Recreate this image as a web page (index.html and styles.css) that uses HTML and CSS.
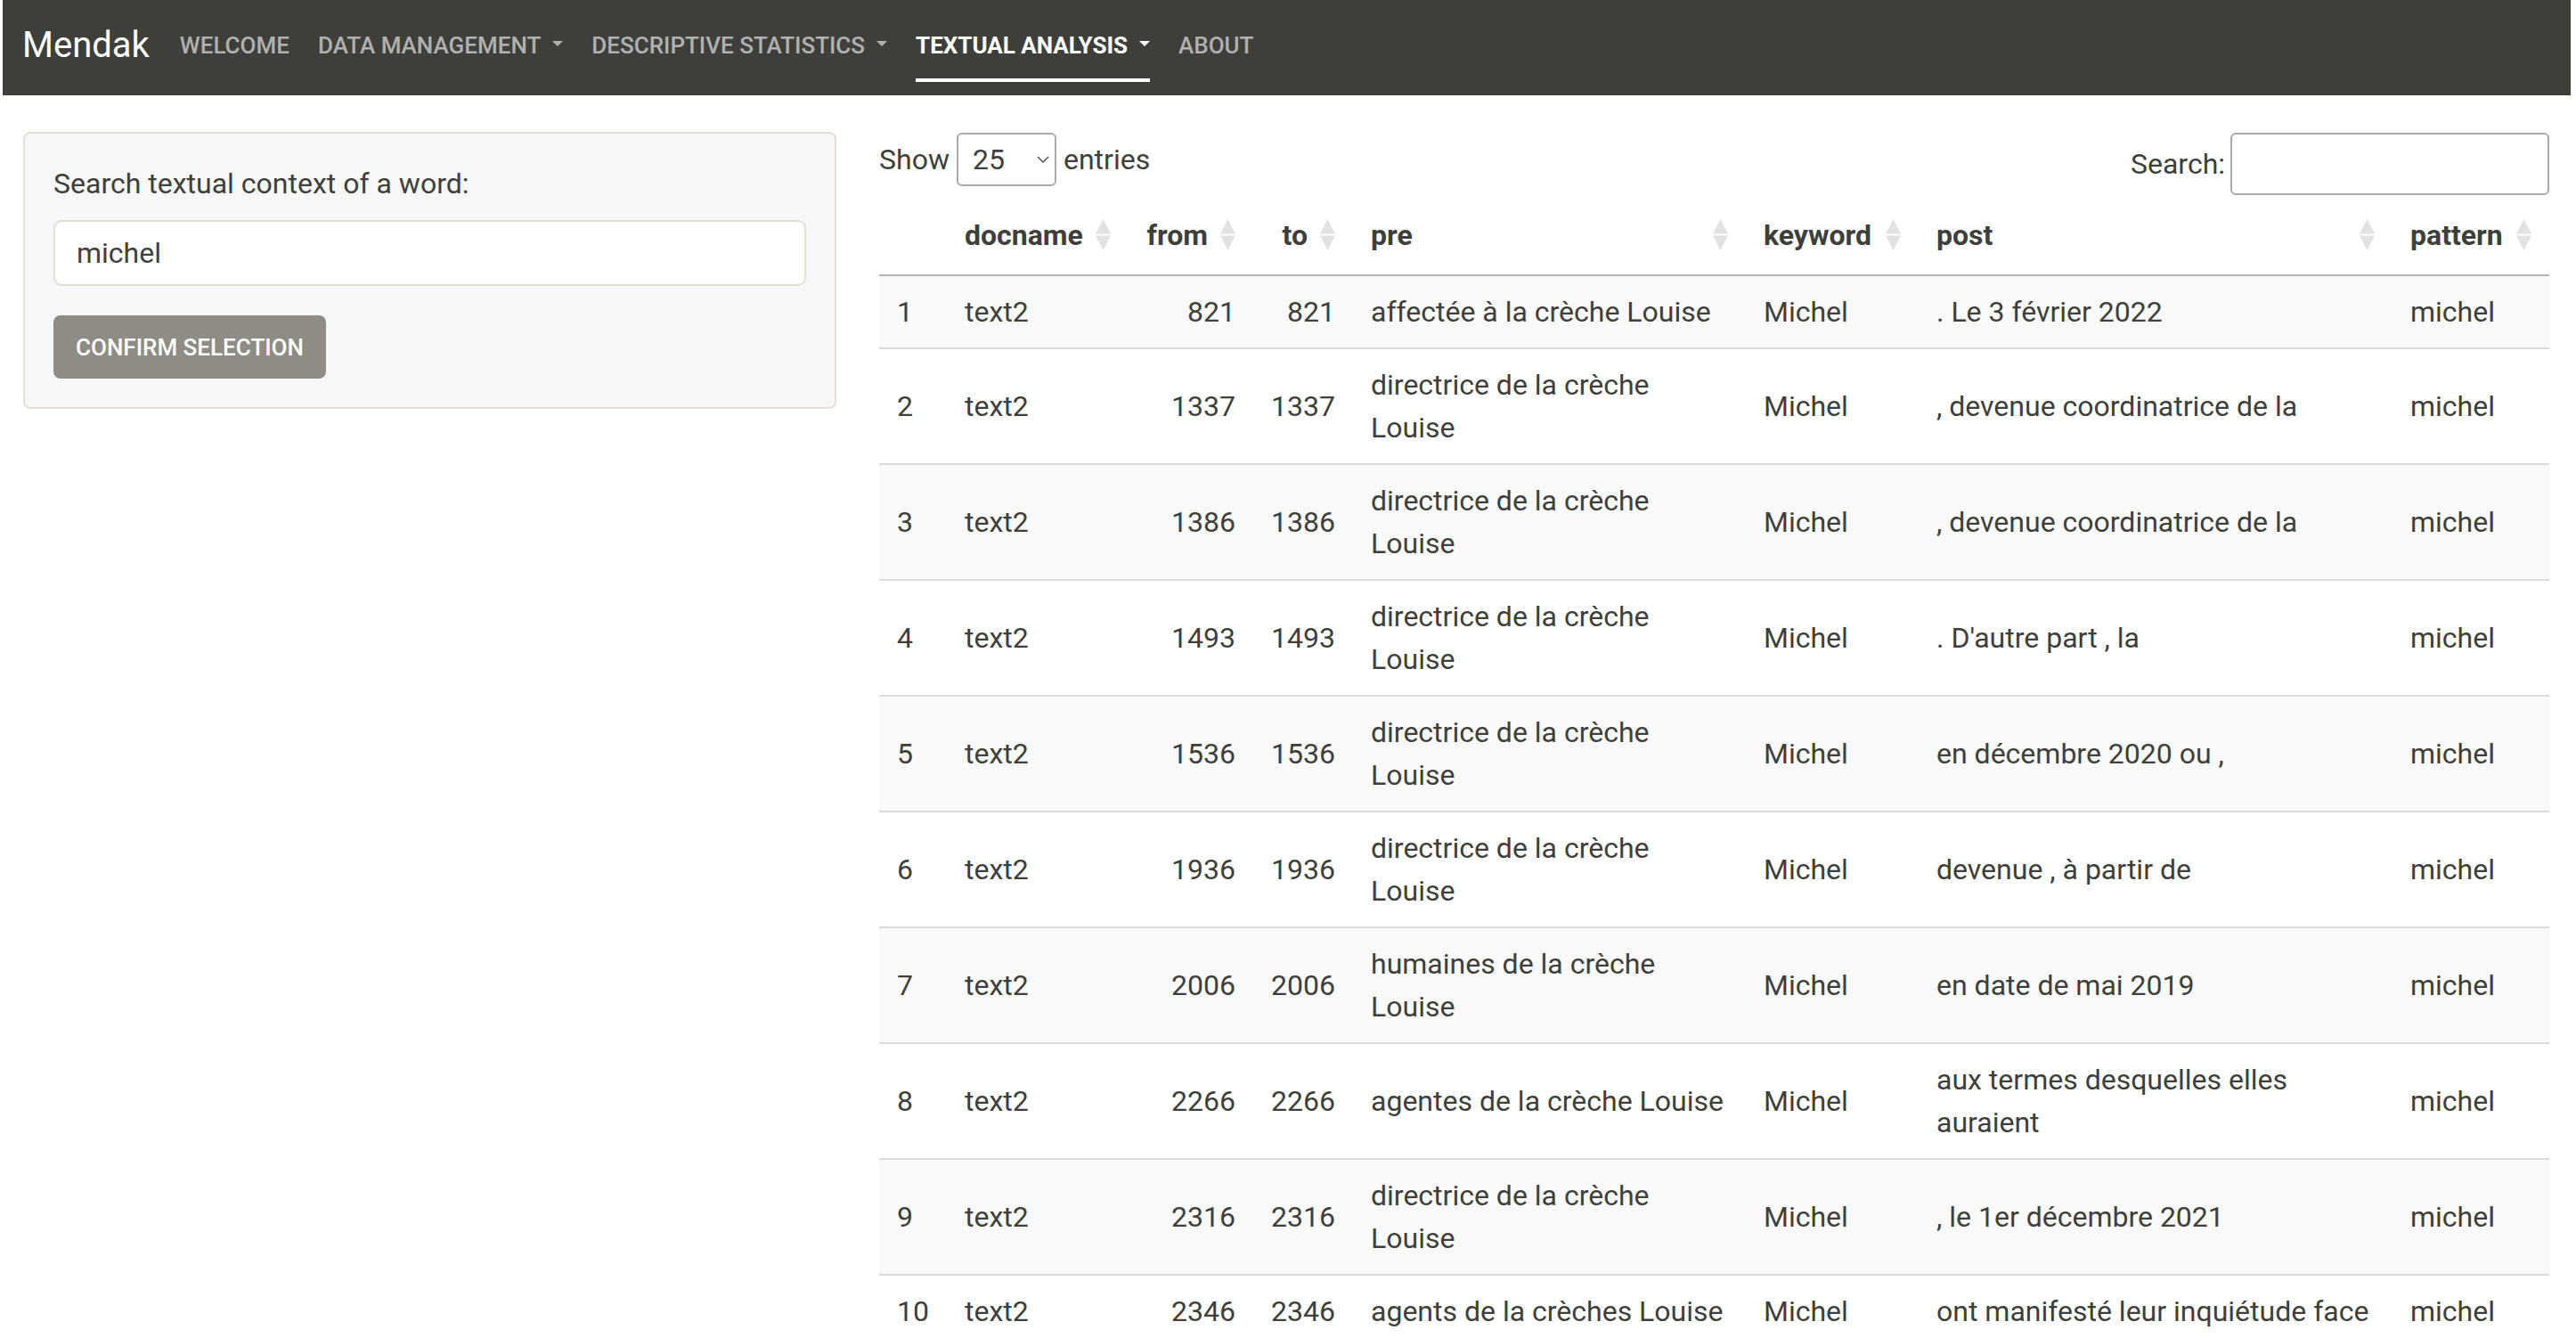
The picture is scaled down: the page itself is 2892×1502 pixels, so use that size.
FILE: index.html
```html
<!DOCTYPE html>
<html lang="en">
<head>
<meta charset="utf-8">
<title>Mendak</title>
<link rel="stylesheet" href="styles.css">
</head>
<body>
<nav class="navbar">
  <span class="brand">Mendak</span>
  <ul class="nav">
    <li><a class="nav-link">Welcome</a></li>
    <li><a class="nav-link">Data Management<span class="caret"></span></a></li>
    <li><a class="nav-link">Descriptive Statistics<span class="caret"></span></a></li>
    <li><a class="nav-link active">Textual Analysis<span class="caret"></span></a></li>
    <li><a class="nav-link">About</a></li>
  </ul>
</nav>

<div class="layout">
  <aside class="sidebar">
    <div class="well">
      <label class="control-label">Search textual context of a word:</label>
      <div class="text-input">michel</div>
      <button class="btn">Confirm selection</button>
    </div>
  </aside>

  <main class="content">
    <div class="dt-top">
      <div class="dt-length">Show
        <span class="dt-select"><span>25</span><svg class="chev" width="14" height="8" viewBox="0 0 14 8"><polyline points="1,1 7,7 13,1" fill="none" stroke="#555" stroke-width="1.5"/></svg></span>
        entries</div>
      <div class="dt-filter">Search:<span class="dt-search"></span></div>
    </div>

    <table class="dt">
      <colgroup>
        <col class="c-idx"><col class="c-doc"><col class="c-from"><col class="c-to"><col class="c-pre"><col class="c-key"><col class="c-post"><col class="c-pat">
      </colgroup>
      <thead>
        <tr>
          <th class="idx"></th>
          <th>docname<svg class="sort" viewBox="0 0 17 35"><polygon points="8.5,0 17,16.5 0,16.5"/><polygon points="0,18.5 17,18.5 8.5,35"/></svg></th>
          <th class="num">from<svg class="sort" viewBox="0 0 17 35"><polygon points="8.5,0 17,16.5 0,16.5"/><polygon points="0,18.5 17,18.5 8.5,35"/></svg></th>
          <th class="num">to<svg class="sort" viewBox="0 0 17 35"><polygon points="8.5,0 17,16.5 0,16.5"/><polygon points="0,18.5 17,18.5 8.5,35"/></svg></th>
          <th>pre<svg class="sort" viewBox="0 0 17 35"><polygon points="8.5,0 17,16.5 0,16.5"/><polygon points="0,18.5 17,18.5 8.5,35"/></svg></th>
          <th>keyword<svg class="sort" viewBox="0 0 17 35"><polygon points="8.5,0 17,16.5 0,16.5"/><polygon points="0,18.5 17,18.5 8.5,35"/></svg></th>
          <th>post<svg class="sort" viewBox="0 0 17 35"><polygon points="8.5,0 17,16.5 0,16.5"/><polygon points="0,18.5 17,18.5 8.5,35"/></svg></th>
          <th>pattern<svg class="sort" viewBox="0 0 17 35"><polygon points="8.5,0 17,16.5 0,16.5"/><polygon points="0,18.5 17,18.5 8.5,35"/></svg></th>
        </tr>
      </thead>
      <tbody>
        <tr><td>1</td><td>text2</td><td class="num">821</td><td class="num">821</td><td>affectée à la crèche Louise</td><td>Michel</td><td>. Le 3 février 2022</td><td>michel</td></tr>
        <tr><td>2</td><td>text2</td><td class="num">1337</td><td class="num">1337</td><td>directrice de la crèche Louise</td><td>Michel</td><td>, devenue coordinatrice de la</td><td>michel</td></tr>
        <tr><td>3</td><td>text2</td><td class="num">1386</td><td class="num">1386</td><td>directrice de la crèche Louise</td><td>Michel</td><td>, devenue coordinatrice de la</td><td>michel</td></tr>
        <tr><td>4</td><td>text2</td><td class="num">1493</td><td class="num">1493</td><td>directrice de la crèche Louise</td><td>Michel</td><td>. D'autre part , la</td><td>michel</td></tr>
        <tr><td>5</td><td>text2</td><td class="num">1536</td><td class="num">1536</td><td>directrice de la crèche Louise</td><td>Michel</td><td>en décembre 2020 ou ,</td><td>michel</td></tr>
        <tr><td>6</td><td>text2</td><td class="num">1936</td><td class="num">1936</td><td>directrice de la crèche Louise</td><td>Michel</td><td>devenue , à partir de</td><td>michel</td></tr>
        <tr><td>7</td><td>text2</td><td class="num">2006</td><td class="num">2006</td><td>humaines de la crèche Louise</td><td>Michel</td><td>en date de mai 2019</td><td>michel</td></tr>
        <tr><td>8</td><td>text2</td><td class="num">2266</td><td class="num">2266</td><td>agentes de la crèche Louise</td><td>Michel</td><td>aux termes desquelles elles auraient</td><td>michel</td></tr>
        <tr><td>9</td><td>text2</td><td class="num">2316</td><td class="num">2316</td><td>directrice de la crèche Louise</td><td>Michel</td><td>, le 1er décembre 2021</td><td>michel</td></tr>
        <tr><td>10</td><td>text2</td><td class="num">2346</td><td class="num">2346</td><td>agents de la crèches Louise</td><td>Michel</td><td>ont manifesté leur inquiétude face</td><td>michel</td></tr>
      </tbody>
    </table>
  </main>
</div>
</body>
</html>
```

FILE: styles.css
```css
* { box-sizing: border-box; }

body {
  margin: 0;
  background: #fff;
  color: #3e3f3a;
  font-family: Roboto, "Liberation Sans", sans-serif;
  font-size: 32px;
  line-height: 48px;
}

/* ---------- navbar ---------- */
.navbar {
  display: flex;
  align-items: center;
  height: 107px;
  margin: 0 6px 0 3px;
  padding: 0 0 5px 22px;
  background: #3e3f3a;
}

.brand {
  font-size: 40px;
  line-height: 60px;
  color: #fff;
  margin-right: 18px;
}

.nav {
  display: flex;
  margin: 0;
  padding: 0;
  list-style: none;
}

.nav-link {
  position: relative;
  display: block;
  padding: 0 16px;
  font-size: 26px;
  line-height: 39px;
  font-weight: 500;
  text-transform: uppercase;
  color: rgba(255, 255, 255, 0.6);
}

.nav-link.active {
  color: #fff;
  font-weight: 700;
}

.nav-link.active::after {
  content: "";
  position: absolute;
  left: 16px;
  right: 16px;
  top: 56px;
  height: 4px;
  background: #fff;
}

.caret {
  display: inline-block;
  margin-left: 13px;
  vertical-align: 8px;
  border-top: 6px solid currentColor;
  border-left: 6px solid transparent;
  border-right: 6px solid transparent;
}

/* ---------- layout ---------- */
.layout {
  display: flex;
  align-items: flex-start;
  gap: 48px;
  padding: 41px 30px 0 26px;
}

.sidebar {
  flex: none;
  width: 913px;
}

.well {
  background: #f7f7f7;
  border: 2px solid #e3dfd7;
  border-radius: 8px;
  padding: 32px;
}

.control-label {
  display: block;
  margin-bottom: 17px;
}

.text-input {
  height: 74px;
  padding: 0 24px;
  background: #fff;
  border: 2px solid #e3dfd7;
  border-radius: 9px;
  line-height: 70px;
  color: #3e3f3a;
}

.btn {
  display: block;
  width: 306px;
  height: 71px;
  margin-top: 33px;
  padding: 0;
  border: 0;
  border-radius: 8px;
  background: #8e8c84;
  color: #fff;
  font-family: inherit;
  font-size: 26px;
  font-weight: 500;
  text-transform: uppercase;
}

.content {
  flex: 1;
  min-width: 0;
}

/* ---------- datatable controls ---------- */
.dt-top {
  display: flex;
  justify-content: space-between;
  align-items: flex-start;
  height: 72px;
  padding-top: 1px;
}

.dt-length {
  display: flex;
  align-items: center;
  height: 60px;
}

.dt-select {
  display: flex;
  align-items: center;
  justify-content: space-between;
  width: 112px;
  height: 60px;
  margin: 0 8px;
  padding: 0 6px 0 16px;
  border: 2px solid #aaa;
  border-radius: 6px;
}

.chev { display: block; }

.dt-filter {
  display: flex;
  align-items: center;
  height: 70px;
}

.dt-search {
  display: block;
  width: 358px;
  height: 70px;
  margin-left: 6px;
  border: 2px solid #aaa;
  border-radius: 6px;
}

/* ---------- table ---------- */
.dt {
  width: 100%;
  table-layout: fixed;
  border-collapse: separate;
  border-spacing: 0;
}

.c-idx { width: 76px; }
.c-doc { width: 204px; }
.c-from { width: 140px; }
.c-to { width: 112px; }
.c-pre { width: 441px; }
.c-key { width: 194px; }
.c-post { width: 532px; }
.c-pat { width: 176px; }

.dt th {
  position: relative;
  padding: 20px 60px 20px 20px;
  border-bottom: 2px solid #b3b3b3;
  text-align: left;
  font-weight: 700;
  white-space: nowrap;
}

.dt th.num {
  text-align: right;
  padding-right: 51px;
}

.dt th.idx { padding-right: 20px; }

.sort {
  position: absolute;
  top: 26px;
  right: 20px;
  width: 17px;
  height: 35px;
  fill: #e2e2e2;
}

.dt td {
  padding: 16px 20px;
  border-top: 2px solid #d9d9d9;
  vertical-align: middle;
}

.dt tbody tr:first-child td { border-top: 0; }

.dt tbody tr:nth-child(odd) td { background: #f9f9f9; }

.dt td.num { text-align: right; }
```
